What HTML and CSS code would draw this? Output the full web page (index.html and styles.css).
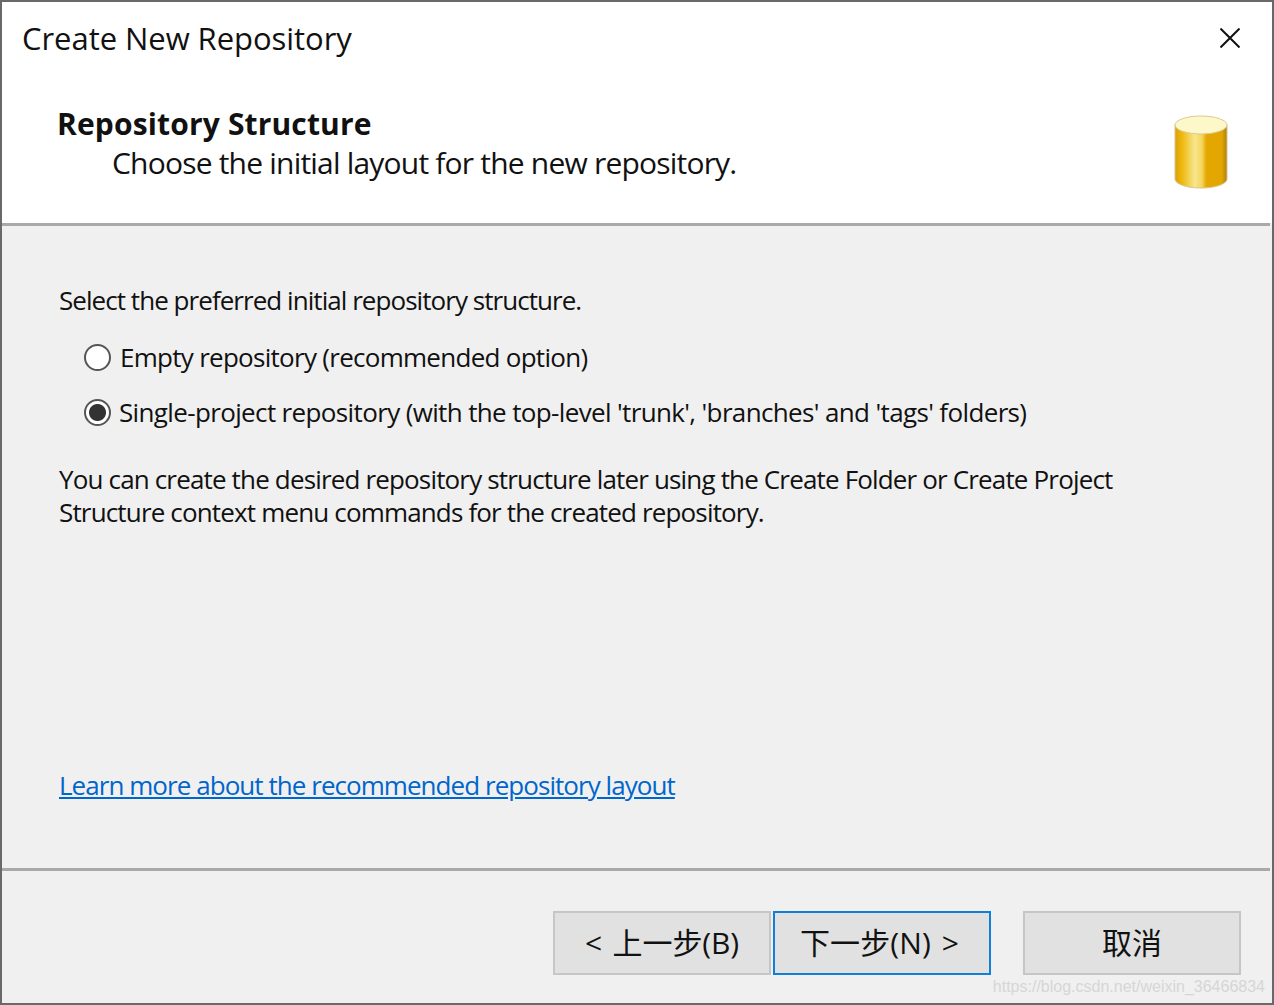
FILE: index.html
```html
<!DOCTYPE html>
<html lang="en">
<head>
    <meta charset="UTF-8">
    <title>Create New Repository</title>
    <link rel="stylesheet" href="styles.css">
</head>
<body>
    <div class="window">
        <div class="header">
            <div class="titlebar">
                <div class="title">Create New Repository</div>
                <svg class="close" width="20" height="20" viewBox="0 0 20 20">
                    <path d="M0.5 0.5L19.5 19.5M19.5 0.5L0.5 19.5" stroke="#111" stroke-width="2" fill="none"/>
                </svg>
            </div>
            <div class="banner">
                <div class="banner-text">
                    <h1>Repository Structure</h1>
                    <div class="subtitle">Choose the initial layout for the new repository.</div>
                </div>
                <svg class="db-icon" width="54" height="74" viewBox="0 0 54 74">
                    <defs>
                        <linearGradient id="bodyGrad" x1="0" y1="0" x2="1" y2="0">
                            <stop offset="0" stop-color="#d9a106"/>
                            <stop offset="0.14" stop-color="#efb90f"/>
                            <stop offset="0.38" stop-color="#f7e68e"/>
                            <stop offset="0.52" stop-color="#f5d55a"/>
                            <stop offset="0.6" stop-color="#e5a802"/>
                            <stop offset="0.9" stop-color="#e3a600"/>
                            <stop offset="1" stop-color="#a97f14"/>
                        </linearGradient>
                    </defs>
                    <path d="M1 10V64C1 69 13 73 27 73C41 73 53 69 53 64V10Z" fill="url(#bodyGrad)" stroke="#d8c48c" stroke-width="1"/>
                    <ellipse cx="27" cy="10" rx="26" ry="9" fill="#fdf8c9" stroke="#dcc98f" stroke-width="1"/>
                </svg>
            </div>
        </div>
        <div class="rule"></div>
        <div class="content">
            <p class="lead">Select the preferred initial repository structure.</p>
            <div class="option option-first">
                <span class="radio"></span>
                <span>Empty repository (recommended option)</span>
            </div>
            <div class="option option-second">
                <span class="radio checked"></span>
                <span>Single-project repository (with the top-level 'trunk', 'branches' and 'tags' folders)</span>
            </div>
            <p class="note">You can create the desired repository structure later using the Create Folder or Create Project Structure context menu commands for the created repository.</p>
            <a class="learn" href="#">Learn more about the recommended repository layout</a>
        </div>
        <div class="rule"></div>
        <div class="footer">
            <button class="btn">&lt; 上一步(B)</button>
            <button class="btn btn-next">下一步(N) &gt;</button>
            <button class="btn btn-cancel">取消</button>
        </div>
        <div class="watermark">https://blog.csdn.net/weixin_36466834</div>
    </div>
</body>
</html>
```

FILE: styles.css
```css
html, body {
    margin: 0;
    padding: 0;
}
body {
    font-family: "Open Sans", "Noto Sans CJK SC", sans-serif;
    color: #111;
}
.window {
    position: relative;
    box-sizing: border-box;
    width: 1274px;
    height: 1005px;
    display: flex;
    flex-direction: column;
    border: 2px solid #696969;
    background-color: #f0f0f0;
}
.header {
    height: 221px;
    background-color: #fff;
}
.titlebar {
    height: 72px;
    display: flex;
    align-items: center;
    justify-content: space-between;
    padding: 0 32px 0 20px;
}
.title {
    font-size: 31px;
    letter-spacing: -0.05px;
}
.banner {
    display: flex;
    justify-content: space-between;
    padding: 30px 44px 0 55px;
}
.banner-text h1 {
    margin: 0;
    font-size: 30px;
    line-height: 39px;
    font-weight: 700;
    letter-spacing: 0.15px;
}
.subtitle {
    margin-left: 55px;
    font-size: 30px;
    line-height: 40px;
    letter-spacing: -0.8px;
}
.db-icon {
    margin-top: 11px;
}
.rule {
    height: 3px;
    margin-right: 2px;
    background-color: #a9a9a9;
}
.content {
    height: 642px;
    padding: 0 57px;
    font-size: 26px;
}
.lead {
    margin: 0;
    padding-top: 54px;
    line-height: 40px;
    letter-spacing: -0.95px;
}
.option {
    display: flex;
    align-items: center;
    gap: 9px;
    height: 40px;
    margin-top: 15px;
    padding-left: 25px;
}
.option-first {
    margin-top: 17px;
    letter-spacing: -0.72px;
}
.option-second {
    gap: 8px;
    letter-spacing: -0.64px;
}
.radio {
    box-sizing: border-box;
    width: 27px;
    height: 27px;
    border: 2px solid #555;
    border-radius: 50%;
    background-color: #fff;
    flex-shrink: 0;
}
.radio.checked {
    background: radial-gradient(circle, #333 0, #333 8px, #fff 9px);
}
.note {
    margin: 31px 0 0;
    line-height: 33px;
    letter-spacing: -0.84px;
}
.learn {
    display: block;
    margin-top: 238px;
    line-height: 36px;
    letter-spacing: -0.95px;
    color: #0066cc;
}
.footer {
    flex: 1;
    display: flex;
    align-items: flex-start;
    padding: 40px 0 0 551px;
}
.btn {
    box-sizing: border-box;
    width: 218px;
    height: 64px;
    margin-right: 2px;
    padding: 0 0 4px;
    font-family: "Open Sans", "Noto Sans CJK SC", sans-serif;
    font-size: 30px;
    letter-spacing: -0.1px;
    word-spacing: 3px;
    color: #111;
    background-color: #e1e1e1;
    border: 2px solid #c6c6c6;
}
.btn-next {
    padding-right: 5px;
    letter-spacing: 0.1px;
    border-color: #0f7fd8;
}
.btn-cancel {
    margin-left: 30px;
}
.watermark {
    position: absolute;
    right: 7px;
    bottom: 7px;
    font-family: "Liberation Sans", sans-serif;
    font-size: 16px;
    color: #d6d6d6;
}
```
